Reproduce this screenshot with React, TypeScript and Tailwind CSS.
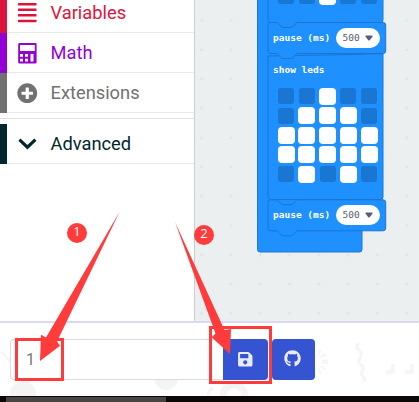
import React from "react";
import { FaPlusCircle, FaSave, FaGithub } from "react-icons/fa";

const BarsIcon = () => (
  <svg width="19" height="20" viewBox="0 0 19 20" fill="currentColor">
    {[0, 5.5, 11, 16.7].map((y) => (
      <rect key={y} x="0" y={y} width="18.5" height="2.5" rx="0.5" />
    ))}
  </svg>
);

const CalculatorIcon = () => (
  <svg width="19" height="21" viewBox="0 0 19 21" fill="currentColor">
    <path
      fillRule="evenodd"
      d="M1.5 0h15.800a1.300 1.300 0 0 1 1.300 1.300v18a1.300 1.300 0 0 1-1.300 1.300H1.500a1.300 1.300 0 0 1-1.300-1.300v-18A1.300 1.300 0 0 1 1.500 0zM2 2v6h14.800V2zM2 11v2.800h3V11zM7 11v2.800h3V11zM2 15.800v2.800h3v-2.800zM7 15.800v2.800h3v-2.800zM12.500 11v7.600h3V11z"
    />
  </svg>
);

const ChevronIcon = () => (
  <svg width="19" height="12" viewBox="0 0 19 12" fill="none" stroke="currentColor" strokeWidth="3.2">
    <path d="M1.4 1.6 9.4 9.2 17.4 1.6" />
  </svg>
);

type RowProps = { label: string; icon: React.ReactNode; bar: string; text: string };

function Row({ label, icon, bar, text }: RowProps) {
  return (
    <div className="flex h-10 shrink-0 border-b border-[#e6eaeb]">
      <div className={`-mb-px w-[7px] shrink-0 ${bar}`} />
      <div className={`flex flex-1 items-center pt-px ${text}`}>
        <span className="ml-[10.5px] flex w-[33px] items-center">{icon}</span>
        <span className="pt-px text-[18.3px] leading-none">{label}</span>
      </div>
    </div>
  );
}

function Leds({ rows }: { rows: string[] }) {
  return (
    <div className="grid w-fit grid-cols-[repeat(5,17px)] gap-x-[3.8px] gap-y-[2.5px]">
      {rows.join("").split("").map((c, i) => (
        <div
          key={i}
          className={
            c === "1"
              ? "size-[17px] rounded-[4px] bg-white"
              : "mt-[0.5px] ml-[0.5px] size-4 rounded-[3px] bg-[#1976d2]"
          }
        />
      ))}
    </div>
  );
}

function Pause() {
  return (
    <div className="flex h-5 items-center whitespace-pre">
      <span className="w-[62.5px]">pause (ms)</span>
      <span className="flex h-5 w-11 items-center rounded-full bg-white pl-[7px] font-normal text-[#575e75]">
        500
        <svg className="ml-[5.5px]" width="8" height="6" viewBox="0 0 8 6" fill="#575e75">
          <path d="M1 .5h6q1 .4.4 1.3L4.7 5.2q-.7.7-1.4 0L.6 1.8Q0 .9 1 .5z" />
        </svg>
      </span>
    </div>
  );
}

function Workspace() {
  return (
    <div className="relative flex-1 overflow-hidden border-l border-[#c9cdcf] bg-[#ebeff0]">
      <svg className="absolute top-0 left-[-195px]" width="419" height="321">
        <defs>
          <pattern id="dots" x="187" y="5.8" width="29.3" height="29.3" patternUnits="userSpaceOnUse">
            <circle cx="14.6" cy="14.6" r="1.5" fill="#dfe3e4" />
          </pattern>
        </defs>
        <rect width="419" height="321" fill="url(#dots)" />
        <g fill="#1e90ff" stroke="#1976d2" strokeWidth="1">
          <path d="M257.5-5V249.5q0 2.500 2.500 2.500H359.500q2.500 0 2.500-2.500V-5z" />
          <path d="M268-5V20q0 2.500 2.500 2.500H277l4 4q1 1 2.500 1h7q1.500 0 2.500-1l4-4h83.500q2.500 0 2.500-2.500V-5" />
          <path d="M268 56V197q0 2.500 2.500 2.500H380.500q2.500 0 2.500-2.500V54z" />
          {[22.5, 199.8].map((y) => (
            <path
              key={y}
              transform={`translate(0 ${y})`}
              d="M268 3Q268 0 270.500 0H277l4 4q1 1 2.500 1h7q1.500 0 2.500-1l4-4H383q2.700 0 2.700 2.500V28.500q0 2.500-2.700 2.500H297l-4 4q-1 1-2.500 1h-7q-1.500 0-2.500-1l-4-4H270.500Q268 31 268 28.500z"
            />
          ))}
        </g>
      </svg>
      <div className="absolute top-[-12.5px] left-[82.500px] flex w-[112px] flex-col font-['DejaVu_Sans_Mono','Liberation_Mono',monospace] text-[9.5px] leading-[12px] font-bold text-white">
        <Leds rows={["00100"]} />
        <div className="mt-[23.5px] -ml-[4.500px]">
          <Pause />
        </div>
        <div className="mt-[15.500px] -ml-[4.500px]">show leds</div>
        <div className="mt-[12px]">
          <Leds rows={["00100", "01110", "11111", "11111", "01010"]} />
        </div>
        <div className="mt-[22.500px] -ml-[4.500px]">
          <Pause />
        </div>
      </div>
    </div>
  );
}

function Decorations() {
  return (
    <svg className="absolute inset-0" width="419" height="73" viewBox="0 323 419 73" fill="none">
      <g fill="#f4f4f4">
        <circle cx="23" cy="394" r="13" />
        <circle cx="166" cy="378" r="12" />
      </g>
      <g stroke="#f5f5f5">
        <path d="M1 352 10 361" strokeWidth="2" />
        <circle cx="234" cy="396" r="11" strokeWidth="7" />
        <path d="M208 396q0-6 5-8" strokeWidth="3" />
        <circle cx="315" cy="362" r="10" strokeWidth="6" strokeDasharray="2 3" />
        <path d="M359 343q-4 4 0 7 4 3 1 8-3 4 1 7 4 3 1 7-2 3 2 5 2 3-1 4" strokeWidth="3" />
        <path d="M386 372h7v-8M405 372h7v-8" strokeWidth="3.5" />
      </g>
    </svg>
  );
}

export default function App() {
  return (
    <div className="relative flex h-[402px] w-[419px] flex-col overflow-hidden bg-white font-[Roboto,sans-serif]">
      <div className="flex h-[321px] shrink-0">
        <div className="flex w-[194px] shrink-0 flex-col bg-white">
          <div className="-mt-[7px] flex flex-col">
            <Row label="Variables" icon={<BarsIcon />} bar="bg-[#dc143c]" text="text-[#dc143c]" />
            <Row label="Math" icon={<CalculatorIcon />} bar="bg-[#9400d3]" text="text-[#9400d3]" />
            <Row
              label="Extensions"
              icon={<FaPlusCircle size={20.5} className="-ml-[0.5px]" />}
              bar="bg-[#717171]"
              text="text-[#717171]"
            />
          </div>
          <div className="mt-[5px] h-px bg-[#dfe2e4]" />
          <div className="mt-[5px]">
            <Row label="Advanced" icon={<ChevronIcon />} bar="bg-[#00272b]" text="text-[#00272b]" />
          </div>
        </div>
        <Workspace />
      </div>
      <div className="relative flex h-[75px] shrink-0 border-t-2 border-[#d9d9ef] bg-white">
        <Decorations />
        <div className="relative mt-4 ml-[10px] flex h-[41px]">
          <div className="flex w-[213px] items-center rounded-l-[4px] border border-r-0 border-[#dcdcdd] bg-white pl-[15px] text-[16px] text-[#777777]">
            1
          </div>
          <button className="flex w-[44.500px] items-center justify-center rounded-r-[4px] bg-[#3454d1] pb-px text-[#e8ebfa]">
            <FaSave size={16.5} />
          </button>
          <button className="ml-1 flex w-[43.500px] items-center justify-center rounded-[4px] bg-[#3454d1] pr-px pb-[2px] text-[#e8ebfa]">
            <FaGithub size={17} />
          </button>
        </div>
      </div>
      <div className="h-[6px] shrink-0 bg-[#0d0808] pt-px">
        <div className="ml-[6px] h-[5px] w-[160px] bg-[#484444]" />
      </div>
      <svg className="absolute inset-0" width="419" height="402" fill="#ff3b3b">
        <g fill="none" stroke="#ff3b3b" strokeWidth="3">
          <rect x="16.5" y="339.5" width="46" height="40" />
          <rect x="210.5" y="327.5" width="60" height="55" />
        </g>
        <path d="M119.5 212 57 341.500 60 345.700 40 361 41 334.700 46 337.500z" />
        <path d="M175 222 215.500 333.500 211.700 337.300 230 354.200 231 329 224.500 330z" />
      </svg>
      <div className="absolute top-[223px] left-[67px] flex size-5 items-center justify-center rounded-full bg-[#ff3b3b] pb-0.5 font-['Open_Sans',sans-serif] text-[13px] text-white">
        1
      </div>
      <div className="absolute top-[225px] left-[194px] flex size-5 items-center justify-center rounded-full bg-[#ff3b3b] pb-0.5 font-['Open_Sans',sans-serif] text-[13px] text-white">
        2
      </div>
    </div>
  );
}
